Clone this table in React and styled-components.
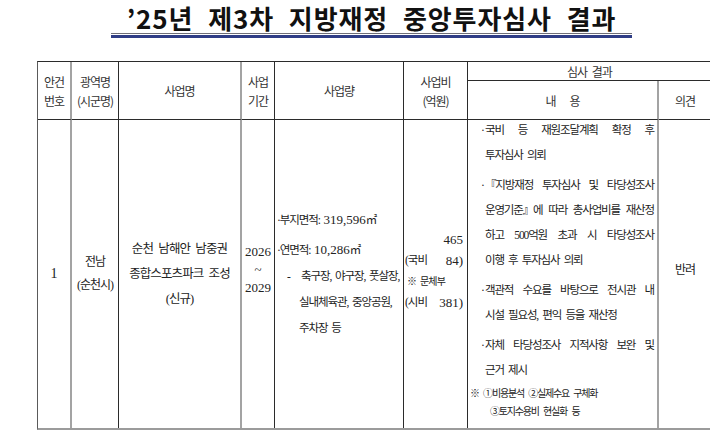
import React from "react";
import styled, { createGlobalStyle } from "styled-components";

const GlobalStyle = createGlobalStyle`
  html, body {
    margin: 0;
    padding: 0;
    background: #ffffff;
  }
  body {
    font-family: "Liberation Serif", "Noto Sans CJK KR", serif;
    color: #222;
  }
`;

const Page = styled.div`
  width: 710px;
  height: 440px;
  overflow: hidden;
`;

/* title with the double rule under it: grey hairline, then a navy bar */
const Heading = styled.header`
  width: 521px;
  margin-left: 111px;
  text-align: center;
`;

const Title = styled.h1`
  margin: 0;
  padding-top: 4px;
  font-family: "Noto Sans CJK KR", "Liberation Sans", sans-serif;
  font-weight: 700;
  font-size: 26px;
  line-height: 28px;
  letter-spacing: 0.9px;
  word-spacing: 8px;
  color: #111;
  white-space: nowrap;
`;

const TitleRule = styled.div`
  margin-top: 1px;
  height: 1px;
  border-top: 1px solid #6f6f78;
  border-bottom: 3px solid #2f3d86;
`;

/* the table */
const Sheet = styled.div`
  display: grid;
  grid-template-columns: 34px 47px 123px 33px 129px 64px 191px 52px;
  grid-template-rows: 19px 39px 308px;
  width: max-content;
  margin: 23px 0 0 37px;
  border-top: 1px solid #2b2b2b;
  border-left: 1px solid #5a5a5a;
  border-bottom: 2px solid #9b9b9b;
`;

const rule = {
  light: "2px solid #a3a3a3",
  dark: "1px solid #2b2b2b",
  none: "none",
};

const Cell = styled.div`
  box-sizing: border-box;
  grid-column: span ${(p) => p.$cols || 1};
  grid-row: span ${(p) => p.$rows || 1};
  border-right: ${(p) => rule[p.$edge || "dark"]};
  border-bottom: ${(p) => (p.$head ? rule.dark : "none")};
  display: flex;
  flex-direction: column;
  justify-content: ${(p) => (p.$top ? "flex-start" : "center")};
  align-items: center;
  text-align: center;
  min-width: 0;
  overflow: hidden;
`;

const HeadText = styled.div`
  font-family: "Noto Sans CJK KR", sans-serif;
  font-size: 12px;
  letter-spacing: -1px;
  word-spacing: 3px;
  line-height: 19px;
  color: #333;
  white-space: nowrap;
`;

const Body = styled.div`
  font-size: ${(p) => p.$size || 11.5}px;
  letter-spacing: ${(p) => p.$ls ?? -1}px;
  word-spacing: 3px;
  line-height: ${(p) => p.$lh || 25}px;
  padding-bottom: ${(p) => p.$lift || 0}px;
  white-space: nowrap;
`;

const Num = styled.span`
  font-family: "Liberation Serif", serif;
  font-size: ${(p) => p.$size || 13}px;
  letter-spacing: 0;
  word-spacing: 0;
`;

/* 사업량 column */
const Spec = styled.div`
  align-self: stretch;
  padding-left: 2px;
  font-size: 11.5px;
  letter-spacing: -1.1px;
  word-spacing: 2px;
  line-height: 26px;
  text-align: left;
  white-space: nowrap;
`;

const SpecLine = styled.div`
  padding-left: ${(p) => p.$indent || 0}px;
  margin-top: ${(p) => (p.$gap ? 4 : 0)}px;
`;

const DashMark = styled.span`
  display: inline-block;
  width: 14px;
`;

/* 사업비 column */
const Cost = styled.div`
  align-self: stretch;
  padding: 0 4px 6px 1px;
  font-size: 11.5px;
  letter-spacing: -1px;
  line-height: 21px;
`;

const CostLine = styled.div`
  display: flex;
  justify-content: ${(p) => p.$align || "space-between"};
  white-space: nowrap;
`;

const CostNote = styled.div`
  font-size: 10px;
  letter-spacing: -0.8px;
  word-spacing: 2px;
  line-height: 21px;
  text-align: left;
  padding-left: 2px;
`;

/* 심사 결과 내용 column */
const Review = styled.div`
  align-self: stretch;
  margin-top: -2px;
  padding: 0 3px 0 17px;
  font-size: 11.5px;
  letter-spacing: -1.15px;
  word-spacing: 2.5px;
  line-height: 25px;
  text-align: left;
`;

const Point = styled.div`
  & + & {
    margin-top: 5px;
  }
`;

const PlainLine = styled.div`
  white-space: nowrap;
`;

const FillLine = styled.div`
  display: flex;
  justify-content: space-between;
  white-space: nowrap;
`;

const Dot = styled.span`
  display: inline-block;
  width: 4px;
  margin-left: -4px;
`;

const Remark = styled.div`
  font-size: 10px;
  letter-spacing: -1.2px;
  word-spacing: 3px;
  line-height: 18px;
  margin-top: ${(p) => (p.$first ? 2 : 0)}px;
  margin-left: ${(p) => p.$shift || 0}px;
  white-space: nowrap;
`;

function Line({ words, fill, lead }) {
  if (!fill) {
    return (
      <PlainLine>
        {lead && <Dot>·</Dot>}
        {words.join(" ")}
      </PlainLine>
    );
  }
  return (
    <FillLine>
      {words.map((w, i) => (
        <span key={i}>
          {i === 0 && lead && <Dot>·</Dot>}
          {w}
        </span>
      ))}
    </FillLine>
  );
}

const reviewPoints = [
  [
    { text: "국비 등 재원조달계획 확정 후", fill: true },
    { text: "투자심사 의뢰" },
  ],
  [
    { text: "『지방재정 투자심사 및 타당성조사", fill: true },
    { text: "운영기준』에 따라 총사업비를 재산정", fill: true },
    { text: "하고 500억원 초과 시 타당성조사", fill: true },
    { text: "이행 후 투자심사 의뢰" },
  ],
  [
    { text: "객관적 수요를 바탕으로 전시관 내", fill: true },
    { text: "시설 필요성, 편익 등을 재산정" },
  ],
  [
    { text: "자체 타당성조사 지적사항 보완 및", fill: true },
    { text: "근거 제시" },
  ],
];

export default function App() {
  return (
    <Page>
      <GlobalStyle />
      <Heading>
        <Title>’25년 제3차 지방재정 중앙투자심사 결과</Title>
        <TitleRule />
      </Heading>

      <Sheet>
        {/* header */}
        <Cell $rows={2} $head $edge="light">
          <HeadText>안건<br />번호</HeadText>
        </Cell>
        <Cell $rows={2} $head>
          <HeadText>광역명<br />(시군명)</HeadText>
        </Cell>
        <Cell $rows={2} $head $edge="light">
          <HeadText>사업명</HeadText>
        </Cell>
        <Cell $rows={2} $head>
          <HeadText>사업<br />기간</HeadText>
        </Cell>
        <Cell $rows={2} $head>
          <HeadText>사업량</HeadText>
        </Cell>
        <Cell $rows={2} $head>
          <HeadText>사업비<br />(억원)</HeadText>
        </Cell>
        <Cell $cols={2} $head $edge="none">
          <HeadText>심사 결과</HeadText>
        </Cell>
        <Cell $head $edge="light">
          <HeadText>내&nbsp;&nbsp;&nbsp;용</HeadText>
        </Cell>
        <Cell $head $edge="none">
          <HeadText>의견</HeadText>
        </Cell>

        {/* body */}
        <Cell $edge="light">
          <Body $lh={20}>
            <Num $size={14}>1</Num>
          </Body>
        </Cell>
        <Cell>
          <Body $lh={23} $size={12}>
            전남<br />(순천시)
          </Body>
        </Cell>
        <Cell $edge="light">
          <Body $size={12.5} $ls={-0.9}>
            순천 남해안 남중권<br />
            종합스포츠파크 조성<br />
            (신규)
          </Body>
        </Cell>
        <Cell>
          <Body $lh={18} $lift={8}>
            <Num>2026</Num><br />
            <Num>~</Num><br />
            <Num>2029</Num>
          </Body>
        </Cell>
        <Cell>
          <Spec>
            <SpecLine>·부지면적: <Num>319,596</Num>㎡</SpecLine>
            <SpecLine $gap>·연면적: <Num>10,286</Num>㎡</SpecLine>
            <SpecLine $indent={10}>
              <DashMark>-</DashMark>축구장, 야구장, 풋살장,
            </SpecLine>
            <SpecLine $indent={22}>실내체육관, 중앙공원,</SpecLine>
            <SpecLine $indent={22}>주차장 등</SpecLine>
          </Spec>
        </Cell>
        <Cell>
          <Cost>
            <CostLine $align="flex-end">
              <Num>465</Num>
            </CostLine>
            <CostLine>
              <span>(국비</span>
              <Num>84)</Num>
            </CostLine>
            <CostNote>※ 문체부</CostNote>
            <CostLine>
              <span>(시비</span>
              <Num>381)</Num>
            </CostLine>
          </Cost>
        </Cell>
        <Cell $edge="light" $top>
          <Review>
            {reviewPoints.map((lines, i) => (
              <Point key={i}>
                {lines.map((l, j) => (
                  <Line key={j} words={l.text.split(" ")} fill={l.fill} lead={j === 0} />
                ))}
              </Point>
            ))}
            <Remark $first $shift={-15}>※ ①비용분석 ②실제수요 구체화</Remark>
            <Remark $shift={5}>③토지수용비 현실화 등</Remark>
          </Review>
        </Cell>
        <Cell $edge="none">
          <Body $size={12} $lift={8}>반려</Body>
        </Cell>
      </Sheet>
    </Page>
  );
}
